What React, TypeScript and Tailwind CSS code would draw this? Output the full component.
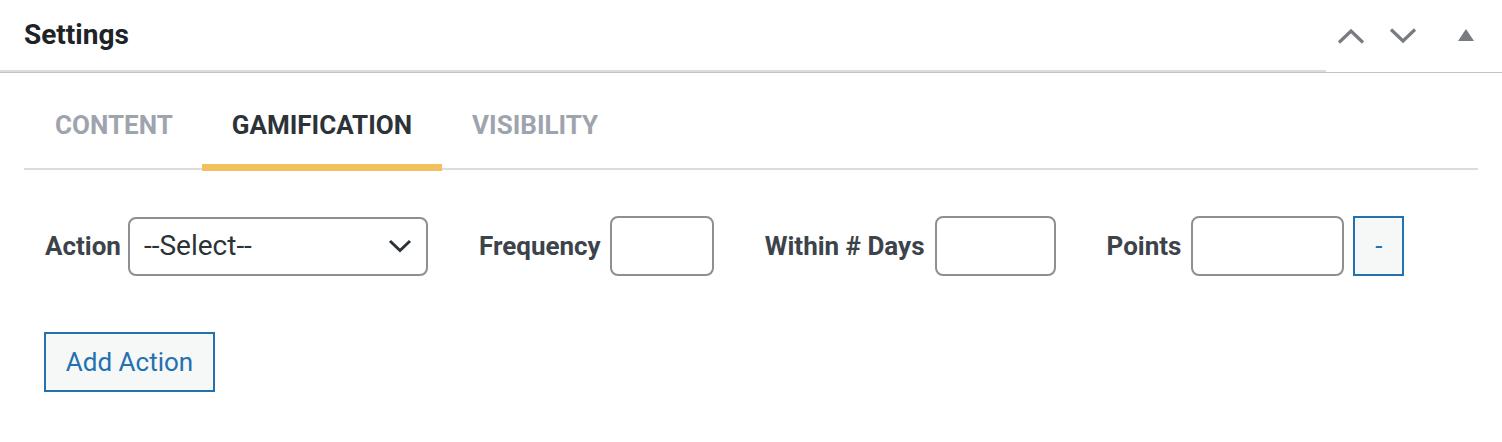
import React from "react";

const font = { fontFamily: "Roboto, 'Liberation Sans', sans-serif" };

function ChevronUp() {
  return (
    <svg width="28" height="16" viewBox="0 0 28 16" fill="none">
      <path d="M2 14.5 L14 3 L26 14.5" stroke="#787c82" strokeWidth="3.2" />
    </svg>
  );
}
function ChevronDown() {
  return (
    <svg width="28" height="16" viewBox="0 0 28 16" fill="none">
      <path d="M2 1.5 L14 13 L26 1.5" stroke="#787c82" strokeWidth="3.2" />
    </svg>
  );
}
function Triangle() {
  return (
    <svg width="16" height="12" viewBox="0 0 16 12">
      <path d="M8 0 L16 12 L0 12 Z" fill="#787c82" />
    </svg>
  );
}

export default function App() {
  return (
    <div className="w-[1502px] h-[442px] bg-white" style={font}>
      <div className="border-b border-[#c3c4c7]">
        <div className="h-[70px] flex items-center justify-between pl-6">
          <h2 className="text-[28px] leading-[32px] font-bold text-[#1d2327] -mt-[1px]">Settings</h2>
          <div className="flex items-center pr-[28px] pt-[2px]">
            <button className="flex items-center">
              <ChevronUp />
            </button>
            <button className="ml-[24px] flex items-center">
              <ChevronDown />
            </button>
            <button className="ml-[41px] flex items-center -mt-[2px]">
              <Triangle />
            </button>
          </div>
        </div>
        <div className="h-[2px] w-[1326px] bg-[#dcdcde]" />
      </div>

      <div className="mx-6">
        <div className="flex border-b-2 border-[#dcdcde] mt-[10px]">
          <div className="pl-[31px] pr-[29px] pt-[27px] pb-[24px] leading-[30px] text-[26px] font-bold text-[#9ea4ae] border-b-[7px] border-transparent -mb-[3px]">
            CONTENT
          </div>
          <div className="px-[30px] pt-[27px] pb-[24px] leading-[30px] text-[26px] font-bold text-[#2c3338] border-b-[7px] border-[#f2c05c] -mb-[3px]">
            GAMIFICATION
          </div>
          <div className="px-[30px] pt-[27px] pb-[24px] leading-[30px] text-[26px] font-bold text-[#9ea4ae] border-b-[7px] border-transparent -mb-[3px]">
            VISIBILITY
          </div>
        </div>

        <div className="pl-[21px] pt-[46px]">
          <div className="flex items-center">
            <label className="text-[26px] font-bold text-[#3c434a] mr-[7px]">Action</label>
            <div className="w-[300px] h-[59px] border-2 border-[#8c8f94] rounded-lg flex items-center justify-between pl-[14px] pr-[14px] bg-white">
              <span className="text-[28px] text-[#2c3338]">--Select--</span>
              <svg width="24" height="14" viewBox="0 0 24 14" fill="none">
                <path d="M2 2 L12 11.5 L22 2" stroke="#2c3338" strokeWidth="3" />
              </svg>
            </div>

            <label className="ml-[51px] text-[26px] font-bold text-[#3c434a] mr-[9px]">Frequency</label>
            <div className="w-[104px] h-[60px] border-2 border-[#8c8f94] rounded-lg bg-white" />

            <label className="ml-[51px] text-[26px] font-bold text-[#3c434a] mr-[10px]">Within # Days</label>
            <div className="w-[121px] h-[60px] border-2 border-[#8c8f94] rounded-lg bg-white" />

            <label className="ml-[51px] text-[26px] font-bold text-[#3c434a] mr-[10px]">Points</label>
            <div className="w-[153px] h-[60px] border-2 border-[#8c8f94] rounded-lg bg-white" />

            <button className="ml-[9px] w-[51px] h-[60px] border-2 border-[#2271b1] bg-[#f6f7f7] text-[#2271b1] text-[26px] flex items-center justify-center">
              -
            </button>
          </div>

          <button className="mt-[56px] w-[171px] h-[60px] border-2 border-[#2271b1] bg-[#f6f7f7] text-[#2271b1] text-[26px] -ml-[1px]">
            Add Action
          </button>
        </div>
      </div>
    </div>
  );
}
